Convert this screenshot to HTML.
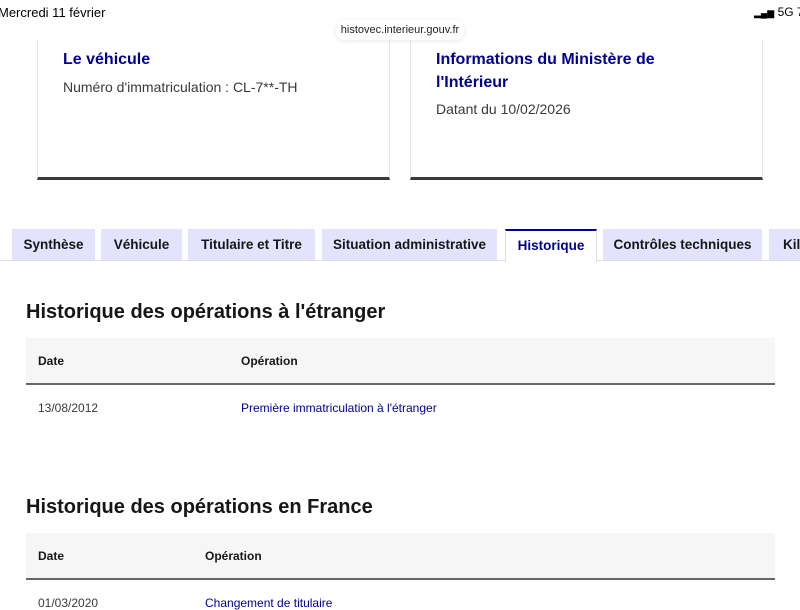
<!DOCTYPE html>
<html><head><meta charset="utf-8"><style>
*{margin:0;padding:0;box-sizing:border-box}
body{width:800px;height:600px;overflow:hidden;background:#fff;font-family:"Liberation Sans",sans-serif;position:relative;color:#161616}
.a{position:absolute;white-space:nowrap}
.card{position:absolute;top:40px;height:140px;border-left:1px solid #e5e5e5;border-right:1px solid #e5e5e5;border-bottom:3px solid #3a3a3a}
.ct{color:#000091;font-weight:bold;font-size:16px}
.cs{color:#3a3a3a;font-size:14px}
.tab{position:absolute;top:229px;height:31px;background:#e3e3fd;font-size:13.5px;font-weight:bold;color:#161616;text-align:center;line-height:31px;white-space:nowrap;overflow:hidden}
.th{position:absolute;left:26px;width:749px;height:47px;background:#f6f6f6;border-bottom:2px solid #666}
.h2{font-size:20px;font-weight:bold;color:#161616}
.sm{font-size:12px;font-weight:bold}
.td{font-size:12px;color:#3a3a3a}
</style></head><body>
<div class="a" style="left:-2px;top:5px;font-size:13px;color:#000">Mercredi 11 février</div>
<div class="a" style="left:754px;top:5px;font-size:12px;color:#000"><span style="font-size:9px">▂▄▆</span> 5G 76</div>
<div class="card" style="left:37px;width:353px"></div>
<div class="card" style="left:410px;width:353px"></div>
<div class="a" style="left:336px;top:20px;width:128px;height:20px;background:#fff;border-radius:8px;box-shadow:0 1px 4px rgba(0,0,0,.1);font-size:11px;text-align:center;line-height:20px;color:#222">histovec.interieur.gouv.fr</div>
<div class="a ct" style="left:63px;top:51px">Le véhicule</div>
<div class="a cs" style="left:63px;top:79px">Numéro d'immatriculation : CL-7**-TH</div>
<div class="a ct" style="left:436px;top:48px;line-height:23px">Informations du Ministère de<br>l'Intérieur</div>
<div class="a cs" style="left:436px;top:101px">Datant du 10/02/2026</div>
<div class="a" style="left:0;top:260px;width:800px;height:1px;background:#ddd"></div>
<div class="tab" style="left:12px;width:83px">Synthèse</div>
<div class="tab" style="left:101px;width:81px">Véhicule</div>
<div class="tab" style="left:188px;width:127px">Titulaire et Titre</div>
<div class="tab" style="left:322px;width:175px">Situation administrative</div>
<div class="tab" style="left:505px;width:92px;background:#fff;color:#000091;border-top:2px solid #000091;border-left:1px solid #ddd;border-right:1px solid #ddd;height:33px;line-height:29px">Historique</div>
<div class="tab" style="left:603px;width:159px">Contrôles techniques</div>
<div class="tab" style="left:769px;width:40px;text-align:left;padding-left:14px">Kilométrage</div>
<div class="a h2" style="left:26px;top:301px">Historique des opérations à l'étranger</div>
<div class="th" style="top:338px"></div>
<div class="a sm" style="left:38px;top:354px">Date</div>
<div class="a sm" style="left:241px;top:354px">Opération</div>
<div class="a td" style="left:38px;top:401px">13/08/2012</div>
<div class="a td" style="left:241px;top:401px;color:#000091">Première immatriculation à l'étranger</div>
<div class="a h2" style="left:26px;top:496px">Historique des opérations en France</div>
<div class="th" style="top:533px"></div>
<div class="a sm" style="left:38px;top:549px">Date</div>
<div class="a sm" style="left:205px;top:549px">Opération</div>
<div class="a td" style="left:38px;top:596px">01/03/2020</div>
<div class="a td" style="left:205px;top:596px;color:#000091">Changement de titulaire</div>
</body></html>
